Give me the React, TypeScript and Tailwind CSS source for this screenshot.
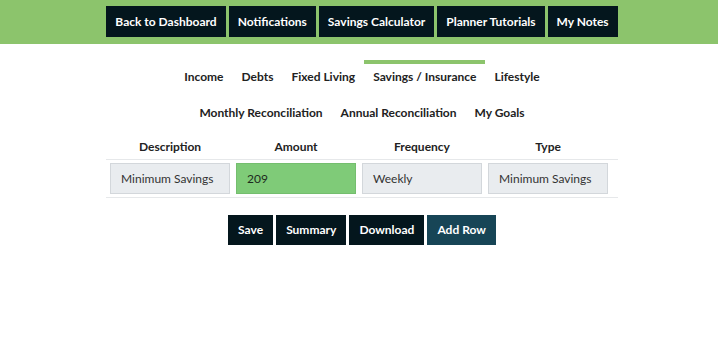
const topLinks = ["Back to Dashboard", "Notifications", "Savings Calculator", "Planner Tutorials", "My Notes"];
const tabsRow1 = ["Income", "Debts", "Fixed Living", "Savings / Insurance", "Lifestyle"];
const tabsRow2 = ["Monthly Reconciliation", "Annual Reconciliation", "My Goals"];
const columns = ["Description", "Amount", "Frequency", "Type"];

function Tab({ label, active }: { label: string; active?: boolean }) {
  return (
    <div
      className={
        "h-[36px] px-[9px] pt-[4px] border-t-4 text-[12px] leading-[18px] font-bold text-[#222] " +
        (active ? "border-[#8cc46c]" : "border-transparent")
      }
    >
      {label}
    </div>
  );
}

function DarkButton({ label, teal }: { label: string; teal?: boolean }) {
  return (
    <button
      className={
        "h-[30px] px-[10px] text-[12px] font-bold text-white " +
        (teal ? "bg-[#174556]" : "bg-[#04161d]")
      }
    >
      {label}
    </button>
  );
}

export default function App() {
  return (
    <div className="min-h-[354px] bg-white font-['Lato','Liberation_Sans',sans-serif]">
      <header className="h-[44px] bg-[#8cc46c] flex justify-center items-start pt-[6px] pl-[6px] gap-[3px]">
        {topLinks.map((l) => (
          <button key={l} className="h-[31px] px-[9px] bg-[#04161d] text-white text-[12px] font-bold">
            {l}
          </button>
        ))}
      </header>

      <div className="pl-[6px] pt-[16px]">
        <nav className="flex justify-center">
          {tabsRow1.map((t) => (
            <Tab key={t} label={t} active={t === "Savings / Insurance"} />
          ))}
        </nav>
        <nav className="flex justify-center">
          {tabsRow2.map((t) => (
            <Tab key={t} label={t} />
          ))}
        </nav>
      </div>

      <div className="ml-[106px] w-[512px]">
        <div className="grid grid-cols-[120px_120px_120px_120px] gap-x-[6px] pl-[4px] h-[28px] items-end pb-[3px] border-b border-[#e6e8ea]">
          {columns.map((c) => (
            <div key={c} className="text-center text-[12px] leading-[18px] font-bold text-[#222]">
              {c}
            </div>
          ))}
        </div>
        <div className="grid grid-cols-[120px_120px_120px_120px] gap-x-[6px] pl-[4px] pt-[3px] pb-[3px] border-b border-[#e6e8ea]">
          <div className="h-[31px] bg-[#e9ecef] border border-[#d3d7db] pl-[10px] flex items-center text-[12px] text-[#333]">
            Minimum Savings
          </div>
          <div className="h-[31px] bg-[#7fcb78] border border-[#74be6e] pl-[10px] flex items-center text-[12px] text-[#1e2a1e]">
            209
          </div>
          <div className="h-[31px] bg-[#e9ecef] border border-[#d3d7db] pl-[10px] flex items-center text-[12px] text-[#333]">
            Weekly
          </div>
          <div className="h-[31px] bg-[#e9ecef] border border-[#d3d7db] pl-[10px] flex items-center text-[12px] text-[#333]">
            Minimum Savings
          </div>
        </div>
      </div>

      <div className="flex justify-center gap-[3px] pl-[6px] mt-[17px]">
        <DarkButton label="Save" />
        <DarkButton label="Summary" />
        <DarkButton label="Download" />
        <DarkButton label="Add Row" teal />
      </div>
    </div>
  );
}
